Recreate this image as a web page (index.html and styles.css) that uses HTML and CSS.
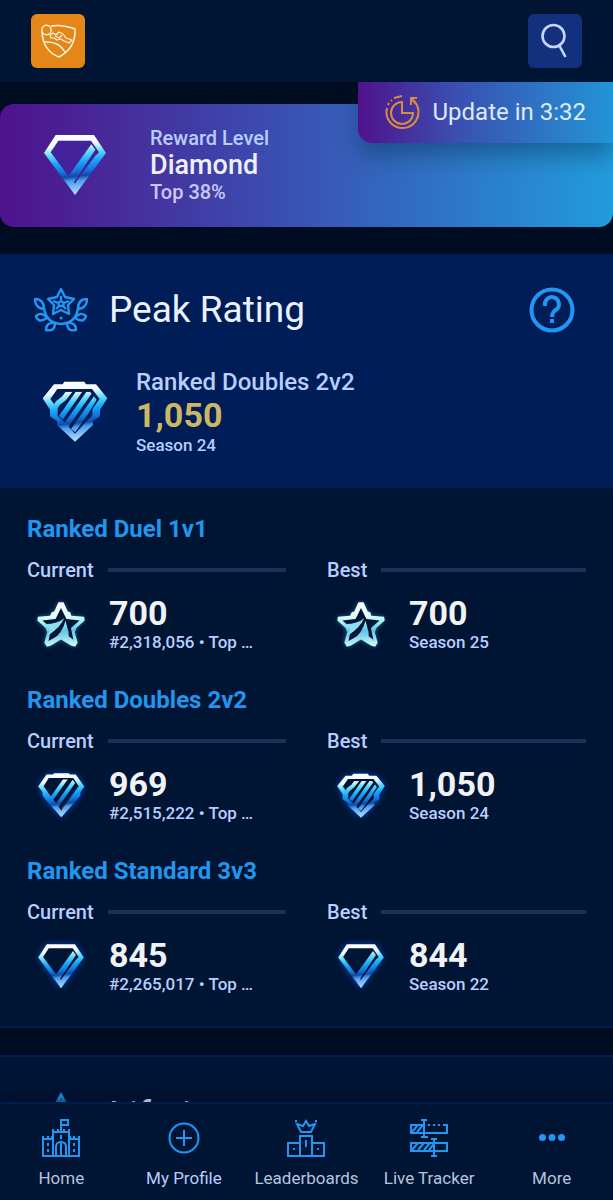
FILE: index.html
```html
<!DOCTYPE html>
<html lang="en">
<head>
<meta charset="utf-8">
<meta name="viewport" content="width=device-width, initial-scale=1">
<title>Player Profile</title>
<link rel="stylesheet" href="styles.css">
</head>
<body>
<svg class="defs" aria-hidden="true">
  <defs>
    <linearGradient id="gem" gradientUnits="userSpaceOnUse" x1="80" y1="0" x2="100" y2="180">
      <stop offset="0" stop-color="#fff"/><stop offset=".17" stop-color="#f1faff"/>
      <stop offset=".3" stop-color="#65dcfa"/><stop offset=".45" stop-color="#18a8fa"/>
      <stop offset=".6" stop-color="#1675dc"/><stop offset=".69" stop-color="#0c4ca8"/>
      <stop offset=".76" stop-color="#4a9ced"/><stop offset="1" stop-color="#bde2ff"/>
    </linearGradient>
    <linearGradient id="ice" gradientUnits="userSpaceOnUse" x1="70" y1="0" x2="78" y2="140">
      <stop offset="0" stop-color="#fff"/><stop offset=".3" stop-color="#e6fffb"/>
      <stop offset=".44" stop-color="#a5f3f1"/><stop offset=".64" stop-color="#62c3ea"/>
      <stop offset="1" stop-color="#d0fff6"/>
    </linearGradient>
    <clipPath id="gem2-clip"><path d="M46 25H139L160 53L96 146L68 130L24 53Z"/></clipPath>
    <clipPath id="gem3-clip"><path d="M50 30H142L162 54L144 84V104L98 152L62 126V114L42 97V82L26 54Z"/></clipPath>
    <symbol id="gem1" viewBox="-9 -9 204 204">
      <path fill="url(#gem)" d="M35 0H150L186 54L93 180L0 54Z"/>
      <path class="gem-inner" d="M43 17H141L165 52L93 150L20 52Z"/>
      <path fill="url(#gem)" d="M142 28L154 44L92 138L93 151L84 152L60 116L74 122Z"/>
      <path fill="url(#gem)" d="M156 60L166 54L98 158L88 146Z"/>
      <path class="gem-cut" d="M157 52L91 144"/>
    </symbol>
    <symbol id="gem2" viewBox="-9 -9 204 204">
      <path fill="url(#gem)" d="M34 5H60L66 0H125L130 5H153L188 54L172 78V92L148 120L94 180L40 120L18 92V78L0 54Z"/>
      <path class="gem-inner" d="M43 20H143L165 53L94 152L22 53Z"/>
      <g clip-path="url(#gem2-clip)" fill="none" stroke="url(#gem)" stroke-width="16">
        <path d="M120 12L45 118M154 22L72 138M172 50L90 166"/>
      </g>
    </symbol>
    <symbol id="gem3" viewBox="-5 -11 204 204">
      <path fill="url(#gem)" d="M34 8H60L65 0H125L130 8H160L194 50L172 84V104L151 119V130L97 180L43 130V119L22 104V84L0 50Z"/>
      <path class="gem-inner" d="M44 22H148L171 52L149 82V102L130 120L97 156L64 120L45 102V82L23 52Z"/>
      <g clip-path="url(#gem3-clip)" fill="none" stroke="url(#gem)" stroke-width="16">
        <path d="M84 24L64 50L46 64L32 84M119 16L40 129M151 16L60 146M183 16L78 166"/>
      </g>
    </symbol>
    <symbol id="star" viewBox="-4 -5 156 152">
      <path fill="url(#ice)" d="M66 0H82L95 29L103 31L106 42L146 45L148 57L122 80L117 94L126 126L118 139L105 135L74 116L43 135L30 139L22 126L31 94L26 80L0 57L2 45L40 42L45 31L53 29Z"/>
      <path fill="#001535" d="M74 18L91 52L132 57L105 80L113 121L74 99L35 121L43 80L16 57L57 52Z"/>
      <path fill="#8bdff0" d="M18 68Q60 70 84 50Q72 78 34 104L40 82Z"/>
      <path fill="url(#ice)" d="M88 58L95 84L115 123L74 105L45 121Q80 94 88 58Z"/>
      <path class="star-cut" d="M97 74L98 106L112 116L102 80Z"/>
    </symbol>
    <symbol id="laurel" viewBox="0 0 54 46">
      <g fill="none" stroke="#2196f3" stroke-width="2.400" stroke-linejoin="round">
        <path d="M27 2L31 10L40 12L34 18L35 27L27 23L19 27L20 18L14 12L23 10ZM27 9V14M19 14L24 16M35 14L30 16M22 22L25 19M32 22L29 19M27 14L30 16L29 19H25L24 16Z"/>
        <path d="M10 21Q12 36 27 37Q42 36 44 21M10 22Q1 21 1 12Q10 12 10 22ZM44 22Q53 21 53 12Q44 12 44 22ZM13 31Q4 37 2 29Q8 24 13 31ZM41 31Q50 37 52 29Q46 24 41 31ZM21 36Q21 45 12 43Q12 35 21 36ZM33 36Q33 45 42 43Q42 35 33 36Z"/>
      </g><circle cx="27" cy="31" r="1.500" fill="#2196f3"/>
    </symbol>
  </defs>
</svg>

<div class="app">
  <header class="topbar">
    <a class="tile logo" href="#" aria-label="Rocket League">
      <svg viewBox="0 0 54 54" fill="none" stroke="#fff3df" stroke-width="1.500" stroke-linejoin="round">
        <circle cx="15.500" cy="16" r="4.700"/>
        <path d="M20 12Q31 10 44 15Q45 34 28 43Q12 37 11 18M14 28Q28 27 34 38"/>
        <path stroke-width="1.200" d="M19 21L22 19L25 21L28 18L32 20L35 24L41 26L38 29L33 27L30 25L26 26L23 24L20 24ZM24 22L28 24L31 21"/>
      </svg>
    </a>
    <button class="tile search" type="button" aria-label="Search">
      <svg viewBox="0 0 54 54" fill="none" stroke="#c5d7ff" stroke-width="2.600"><circle cx="25.500" cy="22" r="11"/><path d="M31 31L37.500 43"/></svg>
    </button>
  </header>

  <main class="content">
    <div class="update">
      <svg viewBox="0 0 36 36" fill="none" stroke="#d98b43" stroke-width="2">
        <path d="M3 14A16 16 0 1 0 29 6"/><path d="M27 11V4H33M27 4L32 10"/>
        <path d="M18 8A11 11 0 1 0 29 19H18Z"/><path d="M10 4L18 2" /><path d="M4 11L5 9M7 7L8 6" stroke-width="2"/>
      </svg>
      <span>Update in 3:32</span>
    </div>

    <section class="reward">
      <svg class="badge on-purple"><use href="#gem1"/></svg>
      <div class="reward-text">
        <div class="reward-label">Reward Level</div>
        <div class="reward-name">Diamond</div>
        <div class="reward-top">Top 38%</div>
      </div>
    </section>

    <section class="peak">
      <div class="card-head">
        <svg class="head-icon"><use href="#laurel"/></svg>
        <h2>Peak Rating</h2>
        <button class="help" type="button" aria-label="Help">
          <svg viewBox="0 0 46 46" fill="none" stroke="#2196f3" stroke-width="4"><circle cx="23" cy="23" r="20.500"/><path d="M16 19V18A7 7 0 1 1 28 22Q23 25 23 30M21 34H25"/></svg>
        </button>
      </div>
      <div class="peak-row">
        <svg class="badge on-navy"><use href="#gem3"/></svg>
        <div>
          <div class="peak-mode">Ranked Doubles 2v2</div>
          <div class="peak-value">1,050</div>
          <div class="peak-season">Season 24</div>
        </div>
      </div>
    </section>

    <section class="ranks">
      <article>
        <h3>Ranked Duel 1v1</h3>
        <div class="pair">
          <div><div class="rule">Current</div>
            <div class="stat"><svg class="rank star"><use href="#star"/></svg><div class="stat-text"><div class="value">700</div><div class="note">#2,318,056 • Top …</div></div></div></div>
          <div><div class="rule">Best</div>
            <div class="stat"><svg class="rank star"><use href="#star"/></svg><div class="stat-text"><div class="value">700</div><div class="note">Season 25</div></div></div></div>
        </div>
      </article>
      <article>
        <h3>Ranked Doubles 2v2</h3>
        <div class="pair">
          <div><div class="rule">Current</div>
            <div class="stat"><svg class="rank"><use href="#gem2"/></svg><div class="stat-text"><div class="value">969</div><div class="note">#2,515,222 • Top …</div></div></div></div>
          <div><div class="rule">Best</div>
            <div class="stat"><svg class="rank"><use href="#gem3"/></svg><div class="stat-text"><div class="value">1,050</div><div class="note">Season 24</div></div></div></div>
        </div>
      </article>
      <article>
        <h3>Ranked Standard 3v3</h3>
        <div class="pair">
          <div><div class="rule">Current</div>
            <div class="stat"><svg class="rank"><use href="#gem1"/></svg><div class="stat-text"><div class="value">845</div><div class="note">#2,265,017 • Top …</div></div></div></div>
          <div><div class="rule">Best</div>
            <div class="stat"><svg class="rank"><use href="#gem1"/></svg><div class="stat-text"><div class="value">844</div><div class="note">Season 22</div></div></div></div>
        </div>
      </article>
    </section>

    <section class="lifetime">
      <div class="card-head">
        <svg class="head-icon" viewBox="0 0 54 54"><path fill="#2196f3" d="M27 4L50 46H4Z"/><path stroke="#0d5ba9" stroke-width="1.500" d="M24 18V12M27 16V10M30 18V12"/></svg>
        <h2>Lifetime</h2>
      </div>
    </section>
  </main>

  <nav class="tabs">
    <a href="#"><svg viewBox="0 0 38 38"><path d="M1 17V37H37V17M11 10V37M27 10V37M1 20H11M27 20H37M6 17V20M10 17V20M28 17V20M32 17V20M11 13H27M11 10V13M16 10V13M22 10V13M19 12V1H26V6H19M14 37V28Q14 23 19 23Q24 23 24 28V37M19 16V20M19 24V37M6 24V27M6 30V33M32 24V27M32 30V33"/></svg><span>Home</span></a>
    <a href="#" class="active"><svg viewBox="0 0 38 38"><circle cx="19" cy="19" r="14.500"/><path d="M19 11V27M11 19H27"/></svg><span>My Profile</span></a>
    <a href="#"><svg viewBox="0 0 38 38"><path d="M13 37V17H25V37M13 24H1V37H37V24H25M19 21V28M6 30H8M30 30H32M14 13L10 5L16 7L19 2L22 7L28 5L24 13ZM9 1V3M29 1V3"/></svg><span>Leaderboards</span></a>
    <a href="#"><svg viewBox="0 0 38 38"><path d="M14 6H1V14H37V6H33M18 6H20M23 6H25M28 6H30M11 1H17M14 1V18M11 18H18M24 24H1V32H24M24 24H37V32H24M21 20H27M24 20V37M21 37H27M2 13L8 6M7 13L13 6M2 31L8 24M8 31L14 24M14 31L20 24M19 31L24 25"/></svg><span>Live Tracker</span></a>
    <a href="#"><svg viewBox="0 0 38 38" class="dots"><circle cx="9.500" cy="18.500" r="3.500"/><circle cx="19" cy="18.500" r="3.500"/><circle cx="28.500" cy="18.500" r="3.500"/></svg><span>More</span></a>
  </nav>
</div>
</body>
</html>
```
FILE: styles.css
```css
* { box-sizing: border-box; }
body {
  margin: 0;
  background: #000c22;
  color: #b8ceff;
  font-family: Roboto, "Liberation Sans", sans-serif;
  font-weight: 500;
}
h2, h3 { margin: 0; }
button { border: 0; padding: 0; cursor: pointer; }
svg { display: block; flex: none; }
.defs { position: absolute; width: 0; height: 0; }
.app { display: flex; flex-direction: column; height: 100vh; }

.topbar {
  display: flex;
  justify-content: space-between;
  flex: none;
  padding: 14px 31px;
  background: #001434;
}
.tile { width: 54px; height: 54px; border-radius: 6px; }
.tile svg { width: 54px; height: 54px; }
.logo { background: #e58618; }
.search { background: #12307d; }

.content {
  position: relative;
  flex: 1;
  min-height: 0;
  padding-top: 22px;
  overflow-y: auto;
  scrollbar-width: none;
}
.update {
  position: absolute;
  top: 0;
  right: 0;
  display: flex;
  align-items: center;
  gap: 13px;
  padding: 12px 27px 13px 26px;
  border-radius: 0 0 0 14px;
  background: linear-gradient(90deg, #4f128c, #3a4fb0 38%, #2394d6);
  box-shadow: 0 12px 22px rgba(0, 40, 70, .4);
  color: #dfe9ff;
  font-size: 24px;
  font-weight: 400;
  line-height: 36px;
}
.update svg { width: 36px; height: 36px; }

.reward {
  display: flex;
  align-items: center;
  gap: 41px;
  padding: 21px 41px;
  border-radius: 14px;
  background: linear-gradient(90deg, #4f128c, #3a52b2 48%, #229bdc);
}
.badge { width: 68px; height: 68px; }
.on-purple { --inner: #44229b; }
.on-navy { --inner: #001d57; }
.gem-inner { fill: var(--inner, #001535); }
.gem-cut { fill: none; stroke: var(--inner, #001535); stroke-width: 5px; }
.star-cut { fill: #001535; }
.reward-text { line-height: 27px; }
.reward-label { font-size: 20px; }
.reward-name { color: #eef1fc; font-size: 27px; }
.reward-top { color: #cdc7f3; font-size: 20px; }

.peak { margin-top: 27px; padding: 27px 27px 31px; background: #001d57; }
.card-head { display: flex; align-items: center; height: 58px; padding: 0 11px 0 7px; }
.head-icon { width: 54px; height: 46px; margin-right: 21px; }
.card-head h2 { flex: 1; color: #eaf1ff; font-size: 37px; font-weight: 400; line-height: 48px; }
.help { width: 46px; height: 46px; border-radius: 50%; background: none; }
.help svg { width: 46px; height: 46px; }
.peak-row { display: flex; align-items: center; gap: 27px; margin-top: 28px; padding-left: 14px; }
.peak-mode { font-size: 24px; line-height: 31px; }
.peak-value { color: #cdb765; font-size: 34px; font-weight: 700; line-height: 35px; }
.peak-season { font-size: 17px; line-height: 24px; }

.ranks {
  display: grid;
  gap: 31px;
  padding: 27px 27px 29px;
  border-bottom: 2px solid #001d50;
  background: #001434;
}
.ranks h3 { color: #2196ec; font-size: 24px; font-weight: 700; line-height: 28px; }
.pair { display: grid; grid-template-columns: repeat(2, minmax(0, 1fr)); gap: 41px; margin-top: 13px; }
.rule { display: flex; align-items: center; gap: 14px; font-size: 20px; line-height: 28px; }
.rule::after { content: ""; flex: 1; height: 4px; background: #1f3056; }
.stat { display: flex; align-items: center; gap: 23px; margin: 12px 0 1px; padding-left: 9px; }
.rank { width: 50px; height: 50px; filter: drop-shadow(0 0 3px #0049ba); }
.star { filter: drop-shadow(0 0 2px #236c8b); }
.stat-text { flex: 1; min-width: 0; }
.value { color: #f0f2f5; font-size: 34px; font-weight: 700; line-height: 34px; }
.note { font-size: 17px; line-height: 24px; white-space: nowrap; }

.lifetime {
  margin-top: 27px;
  padding: 29px 27px;
  border-top: 2px solid #001d50;
  background: #001434;
}
.lifetime .head-icon { height: 54px; }

.tabs {
  position: relative;
  display: grid;
  grid-template-columns: repeat(5, minmax(0, 1fr));
  flex: none;
  padding: 15px 0 10px;
  border-top: 2px solid #001d50;
  background: #001434;
  box-shadow: 0 -4px 14px rgba(0, 8, 25, .4);
}
.tabs a {
  display: flex;
  flex-direction: column;
  align-items: center;
  gap: 9px;
  color: #b7c4de;
  font-size: 17px;
  font-weight: 400;
  line-height: 24px;
  text-decoration: none;
  white-space: nowrap;
}
.tabs svg { width: 38px; height: 38px; fill: none; stroke: #2196f3; stroke-width: 2px; }
.tabs .dots { fill: #2196f3; stroke: none; }
.tabs .active { color: #b8ceff; }
```
